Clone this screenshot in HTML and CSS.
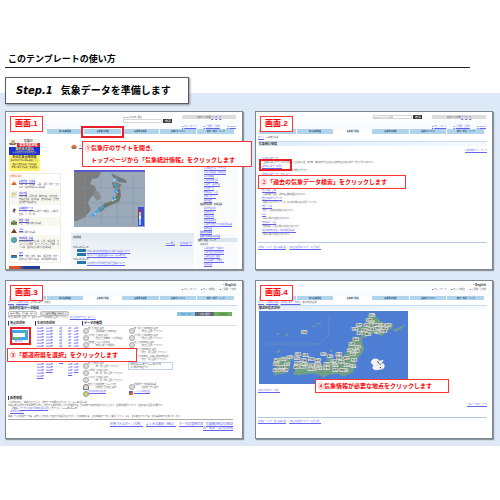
FILE: index.html
```html
<!DOCTYPE html>
<html lang="ja">

<head>
    <meta charset="UTF-8">
    <meta name="viewport" content="width=device-width, initial-scale=1.0">
    <title>このテンプレートの使い方</title>
    <link rel="stylesheet" href="styles.css">
</head>

<body>
    <header class="top">
        <h1>このテンプレートの使い方</h1>
        <h2 class="step"><i>Step.1</i>気象データを準備します</h2>
    </header>

    <main class="board">
        <!-- 画面1 トップページ -->
        <section class="panel">
            <div class="head">
                <form class="search">
                    <label for="q1">Google カスタム検索</label>
                    <div class="line"><input id="q1" type="text"><button type="button">検索</button></div>
                </form>
                <div class="tools">
                    <p class="size">文字サイズ変更 <a href="#">小</a>・<a href="#">中</a>・<a href="#">大</a></p>
                    <p class="quick"><a href="#">サイトマップ</a><a href="#">ご意見・ご感想</a><a href="#">English</a></p>
                </div>
            </div>
            <nav class="tabs">
                <a href="#" class="on">ホーム</a><a href="#">防災気象情報</a><a href="#">気象統計情報</a><a href="#">気象等の知識</a><a href="#">気象庁について</a><a href="#">案内・申請・リンク</a>
            </nav>
            <div class="cols">
                <div class="side">
                    <div class="banner white">
                        <svg viewBox="0 0 8 6"><path d="M0 3h8L6 5H1z" fill="#776f50"/><circle cx="4" cy="2" r="2" fill="#c3b47c"/></svg>
                        <div><b>気象庁</b><b class="red">緊急地震速報</b></div>
                    </div>
                    <div class="banner blue"><b>東日本大震災</b><p>～東北地方太平洋沖地震～</p></div>
                    <div class="banner yellow"><b>防災気象支援情報</b><p>被災地向けの気象情報はこちら</p></div>
                    <div class="banner yellow"><p>被災者支援情報・復旧情報</p><p>節電に関する情報・各種支援</p></div>
                    <div class="menu">
                        <h3>分野別に探す</h3>
                        <div class="item"><svg viewBox="0 0 6 6"><path d="M0 5l3-4 3 4z" fill="#f08a28"/><path d="M1 4h4" stroke="#be4420"/></svg>
                            <div><a href="#">気象警報・注意報</a><p>気象警報・注意報、台風、大雨・洪水・土砂災害・竜巻等の防災気象情報</p></div></div>
                        <div class="item"><svg viewBox="0 0 6 6"><rect width="6" height="6" fill="#cfe5f8"/><circle cx="3" cy="3" r="2" fill="#f6c964"/><path d="M2 4h4" stroke="#fff"/></svg>
                            <div><a href="#">天気予報</a><p>天気予報、週間予報、季節予報、分布予報・時系列予報、黄砂情報、紫外線情報、異常天候早期警戒情報など</p></div></div>
                        <div class="item"><svg viewBox="0 0 6 6"><path d="M1 5l2-4 2 1-1 4z" fill="#999"/><circle cx="3" cy="3" r="1" fill="#444"/></svg>
                            <div><a href="#">気象観測データ</a><p>アメダス・過去の気象データ検索、気象衛星観測、レーダー等</p></div></div>
                        <div class="item"><svg viewBox="0 0 6 6"><path d="M0 3l3-2 3 2v3H0z" fill="#69a56a"/><path d="M0 4l3 1 3-2" stroke="#874d33" fill="none"/></svg>
                            <div><a href="#">地震・津波</a><p>地震、津波に関する情報</p></div></div>
                        <div class="item"><svg viewBox="0 0 6 6"><path d="M0 5l2-3h2l2 3z" fill="#7a4423"/><path d="M2 2l1-2 1 2z" fill="#e25b28"/></svg>
                            <div><a href="#">火山</a><p>火山に関する情報</p></div></div>
                        <div class="item"><svg viewBox="0 0 6 6"><circle cx="3" cy="3" r="3" fill="#4b9cd5"/><path d="M1 2l2-1 1 2-2 2zM4 4l1-1v1z" fill="#76b852"/></svg>
                            <div><a href="#">地球環境・気候</a><p>近年の世界の異常気象、気温、海面水温、エルニーニョ現象、ヒートアイランド現象、オゾン層、黄砂などに関する各種情報</p></div></div>
                        <div class="item"><svg viewBox="0 0 6 6"><path d="M0 3h6v3H0z" fill="#2e87b8"/><path d="M1 3h4L4 4H2z" fill="#833"/></svg>
                            <div><a href="#">海洋</a><p>波浪、潮位、海流、海氷、海面水温、潮汐・高潮などに関する情報、海洋の健康診断表</p></div></div>
                    </div>
                    <div class="strip"></div>
                </div>
                <div class="center">
                    <div class="lead">
                        <svg viewBox="0 0 6 6"><path d="M0 3q3-5 6 0l-1 2H1z" fill="#e57738"/><path d="M1 4h4" stroke="#3e7d9c"/></svg>
                        <a href="#">アメダス</a>
                    </div>
                    <svg class="radar" viewBox="0 0 71 57" role="img" aria-label="アメダス 降水量">
                        <rect width="71" height="57" fill="#9baab8"/>
                        <rect width="71" height="2" fill="#5a5ad0"/>
                        <path d="M0 2h27l-3 6-6 1-2 5 5 2 2 7-6 4-3 6 3 7-6 7-8 4H0z" fill="#7d7d7d"/>
                        <path d="M20 20l5 2 2 6-4 3-3-4z" fill="#8a8a88"/>
                        <path d="M37 3l6 3 9 4 1 3-8-1-6-5z" fill="#777"/>
                        <path d="M24 38l4-2 3-3 7-2 4-5 1-6 3-2 1 8-2 6-8 3-6 3-4 4-2-1z" fill="#6f7569"/>
                        <path d="M38 12l6 1 4 2-4 4-5-1z" fill="#777c72"/>
                        <path d="M41 8l2 3M40 14l3 2M42 18l-1 5M38 27l3 2M22 42l7-5M18 46l4-4M26 38l4-1" stroke="#3da2ee" stroke-width="2"/>
                        <path d="M39 11l3-2M42 21l2 2M20 43l2 1M38 31l4-2" stroke="#b8e4fb"/>
                        <path d="M11 3v54M27 3v54M43 3v54M59 3v54M0 18h71M0 33h71M0 47h71" stroke="#7f90a4" stroke-width=".4"/>
                        <rect x="64" y="37" width="6" height="19" fill="#3a4fe0"/>
                        <path d="M66 39v3" stroke="#d22" stroke-width="2"/><path d="M66 42v4" stroke="#fb4" stroke-width="2"/><path d="M66 46v3" stroke="#ff6" stroke-width="2"/><path d="M66 49v6" stroke="#9cf" stroke-width="2"/>
                    </svg>
                    <div class="news">
                        <h3>新着情報</h3>
                        <p class="more"><a href="#">RSS配信</a><a href="#">新着情報一覧</a></p>
                        <p>平成23年9月30日</p>
                        <ul>
                            <li><a href="#">平成23年8月の地球温暖化に関する情報について</a></li>
                            <li><a href="#">エルニーニョ監視速報No.228（2011年9月）</a></li>
                        </ul>
                        <p>平成23年9月29日</p>
                        <ul>
                            <li><a href="#">東北地方太平洋沖地震の余震活動について</a></li>
                        </ul>
                    </div>
                </div>
                <div class="links">
                    <ul>
                        <li><a href="#">東日本大震災・アクセス</a></li>
                        <li><a href="#">防災気象情報・各種資料</a></li>
                        <li><a href="#">災害の概要</a></li>
                        <li><a href="#">気象観測の記録</a></li>
                        <li><a href="#">気象庁・報道発表</a></li>
                        <li><a href="#">刊行物一覧</a></li>
                        <li><a href="#">地球環境・気候</a></li>
                        <li><a href="#">各種レポート</a></li>
                        <li><a href="#">調査報告</a></li>
                    </ul>
                    <p><b>報道発表資料・各種会議</b></p>
                    <ul>
                        <li><a href="#">報道発表資料</a></li>
                        <li><a href="#">会見の記録</a></li>
                        <li><a href="#">審議会情報</a></li>
                        <li><a href="#">各種会議開催</a></li>
                        <li><a href="#">気象庁が推進する政策評価情報</a></li>
                        <li><a href="#">調達情報</a></li>
                    </ul>
                    <p><a href="#"><b>緊急地震速報</b></a></p>
                    <p><a href="#"><b>気象庁の地震火山月報</b></a></p>
                    <h3>案内・申請・リンク</h3>
                    <p>各種申請</p>
                    <ul>
                        <li><a href="#">気象業務法・予報許可</a></li>
                        <li><a href="#">気象予報士試験の申請</a></li>
                        <li><a href="#">気象の証明・鑑定</a></li>
                        <li><a href="#">法令情報等（手数料）</a></li>
                        <li><a href="#">採用情報</a></li>
                    </ul>
                </div>
            </div>

            <span class="mark mark-tab"></span>
            <b class="tag">画面.1</b>
            <p class="note note1">①気象庁のサイトを開き、<br>　トップページから「気象統計情報」をクリックします</p>
        </section>

        <!-- 画面2 気象統計情報 -->
        <section class="panel">
            <div class="head">
                <form class="search">
                    <div class="line"><input id="q2" type="text" placeholder="Google カスタム検索" aria-label="サイト内検索"><button type="button">検索</button></div>
                </form>
                <div class="tools">
                    <p class="size">文字サイズ変更 <a href="#">小</a>・<a href="#">中</a>・<a href="#">大</a></p>
                    <p class="quick"><a href="#">サイトマップ</a><a href="#">ご意見・ご感想</a><a href="#">English</a></p>
                </div>
            </div>
            <nav class="tabs">
                <a href="#">ホーム</a><a href="#">防災気象情報</a><a href="#" class="on">気象統計情報</a><a href="#">気象等の知識</a><a href="#">気象庁について</a><a href="#">案内・申請・リンク</a>
            </nav>
            <div class="page">
                <p class="crumb"><a href="#">ホーム</a> &gt; 気象統計情報</p>
                <h3 class="bar">気象統計情報</h3>
                <p class="right"><a href="#">気象庁統計サイトマップ</a></p>
                <dl class="stats">
                    <dt><a href="#">最新の気象データ</a></dt>
                    <dd>全国の気象台やアメダスで観測した最新の気温、降水量、風の状況や最大値など各地の最新の気象データがご覧になれます</dd>
                    <dt><a href="#">過去の気象データ検索</a></dt>
                    <dd>過去の気温や降水量などのデータが検索できます</dd>
                    <dt><a href="#">過去の気象データ・ダウンロード</a></dt>
                    <dd>各地の気温や降水量などの観測データを地点ごとにまとめて表示・ダウンロードすることができます</dd>
                    <dt><a href="#">地球環境のデータ</a></dt>
                    <dd>地球温暖化、オゾン層、大気環境、海洋環境など、気象観測所、気象衛星・数値予報、地磁気などの各種資料がございます</dd>
                    <dt><a href="#">天気予報・台風</a></dt>
                    <dd>台風の統計資料、過去の台風経路図があります</dd>
                    <dt><a href="#">数値予報モデルデータ</a></dt>
                    <dd>竜巻およびダウンバーストなどの突風事例を収録しています</dd>
                    <dt><a href="#">地震・津波</a></dt>
                    <dd>地震・津波の各種資料があります</dd>
                    <dt><a href="#">火山</a></dt>
                    <dd>火山に関する資料があります</dd>
                    <dt><a href="#">地球環境・気候</a></dt>
                    <dd>地球環境・気候に関する資料があります</dd>
                    <dt><a href="#">海洋の健康診断表（海洋の総合情報）</a></dt>
                    <dd>海洋に関する資料があります</dd>
                </dl>
                <p class="foot"><a href="#">著作権・リンク・個人情報保護</a> ｜ <a href="#">利用上の注意について（免責事項）</a></p>
            </div>

            <span class="mark mark-link"></span>
            <b class="tag">画面.2</b>
            <p class="note note2">②「過去の気象データ検索」をクリックします</p>
        </section>

        <!-- 画面3 過去の気象データ検索 -->
        <section class="panel">
            <div class="head plain">
                <div class="tools">
                    <p><b>・English</b></p>
                    <p class="quick"><a href="#">サイトマップ</a><a href="#">サイト内検索</a><a href="#">ご意見・ご感想</a></p>
                </div>
            </div>
            <nav class="tabs">
                <a href="#">ホーム</a><a href="#">防災気象情報</a><a href="#" class="on">気象統計情報</a><a href="#">気象等の知識</a><a href="#">気象庁について</a><a href="#">案内・申請・リンク</a>
            </nav>
            <div class="page past">
                <p class="crumb"><a href="#">ホーム</a> &gt; <a href="#">気象統計情報</a> &gt; 過去の気象データ検索</p>
                <h3 class="bar">過去の気象データ検索</h3>
                <div class="modes">
                    <button type="button">地域の気温、降水量、風など</button>
                    <button type="button" class="off">全国の気温、風など</button>
                    <div class="ads"><span>防災くらぶ</span><span class="dark">お天気相談</span><span class="green">気象情報</span></div>
                </div>
                <p>地点と年月日を選択して、表示するデータの種類を選択して下さい。<a href="#">地点選択のやり直しはこちら</a></p>
                <div class="picker">
                    <div>
                        <h4>地点の選択</h4>
                        <a class="area" href="#">
                            <svg viewBox="0 0 18 10"><rect width="18" height="10" fill="#42a7ea"/><path d="M1 9l5-3 4-1 3-4 3 1-3 4-5 3z" fill="#63ba63"/><rect x="3" y="3" width="12" height="4" fill="#fff"/></svg>
                            <span>都道府県</span>
                        </a>
                    </div>
                    <div>
                        <h4>年月日の選択</h4>
                        <div class="years" id="years"></div>
                    </div>
                    <div>
                        <h4>データの種類</h4>
                        <div class="kinds">
                            <ul>
                                <li>年ごとの値を表示<small>（観測開始からの年の値）</small></li>
                                <li>３か月ごとの値を表示<small>（地点ごとの季節・３か月の値）</small></li>
                                <li>観測史上１～１０位の値<small>（年間を通じての順位）</small></li>
                                <li>月ごとの値を表示<small>（年を選択してください）</small></li>
                                <li>旬ごとの値を表示<small>（年を選択してください）</small></li>
                                <li>日ごとの値を表示<small>（年・月を選択して下さい）</small></li>
                                <li>１時間ごとの値を表示<small>（年・月・日を選択して下さい）</small></li>
                                <li>１０分ごとの値を表示<small>（年・月・日を選択して下さい）</small></li>
                                <li class="hill">地点ごとの観測史上１～１０位<small>（観測所ごとの値を表示）</small></li>
                                <li class="leaf"><a href="#">新旧の平年値の比較</a></li>
                            </ul>
                            <ul>
                                <li>年・月ごとの平年値を表示<small>（地点を選択して下さい）</small></li>
                                <li>３か月ごとの平年値を表示<small>（地点を選択して下さい）</small></li>
                                <li>旬ごとの平年値を表示<small>（地点を選択して下さい）</small></li>
                                <li>半旬ごとの平年値を表示<small>（地点、月を選択して下さい）</small></li>
                                <li>日ごとの平年値（最高気温の平年値等）<small>（地点、月を選択して下さい）</small></li>
                                <li class="tip"><span>平年値は1981年から2010年までの<br>３０年平均の値です</span></li>
                                <li class="none"></li>
                                <li class="none"></li>
                                <li>観測所データの品質情報<small>（観測所一覧を表示）</small></li>
                                <li class="mesh"><a href="#">メッシュ平年値図</a></li>
                            </ul>
                        </div>
                    </div>
                </div>
                <h4 class="short">新着情報</h4>
                <p>１０月の新着を、掲載するとともに、過去データの更新を行いました。（2011年9月30日）</p>
                <p>平成23年東北地方太平洋沖地震に伴い、地震や津波の影響を受けた観測所では、震災前後で値の均質性がないことから、観測所の統計について、値の利用に注意が必要です。</p>
                <p>　　詳細は、<a href="#">データを利用する際の注意事項</a>をご覧下さい。（2011年6月29日）</p>
                <p>・<a href="#">過去のお知らせ</a></p>
                <p class="last">掲載している観測データは、過去にさかのぼって修正する場合があります。ご利用の際には、最新の掲載データをご確認ください。なお、主な修正については、新着情報の中でお知らせします。</p>
                <div class="more2">
                    <p><a href="#">利用される方へ（凡例）</a><a href="#">よくある質問（FAQ）</a><a href="#">データの更新状況</a><a href="#">気象観測統計の解説</a></p>
                    <p><a href="#">年・季節・各月の天候</a></p>
                </div>
            </div>

            <span class="mark mark-area"></span>
            <b class="tag">画面.3</b>
            <p class="note note3">③「都道府県を選択」をクリックします</p>
        </section>

        <!-- 画面4 都道府県の選択 -->
        <section class="panel">
            <div class="head plain">
                <div class="tools">
                    <p><b>・English</b></p>
                    <p class="quick"><a href="#">サイトマップ</a><a href="#">サイト内検索</a><a href="#">ご意見・ご感想</a></p>
                </div>
            </div>
            <nav class="tabs">
                <a href="#">ホーム</a><a href="#">防災気象情報</a><a href="#" class="on">気象統計情報</a><a href="#">気象等の知識</a><a href="#">気象庁について</a><a href="#">案内・申請・リンク</a>
            </nav>
            <div class="page past">
                <p class="crumb"><a href="#">ホーム</a> &gt; <a href="#">気象統計情報</a> &gt; <a href="#">過去の気象データ検索</a> &gt; 都道府県の選択</p>
                <h3 class="bar">都道府県の選択</h3>
                <svg class="japan" viewBox="0 0 447 219" role="img" aria-label="日本地図">
                    <rect width="447" height="219" fill="#4d7ed3"/>
                    <path d="M15 99h165l30-27V10" fill="none" stroke="#7893c4" stroke-width="2"/>
                    <g fill="#6ea182" stroke="#8ea9a5" stroke-width="1">
                        <path d="M337 5l14 12 16 16 20 9 14-4-4 14-15 8-13 14-21-8-22 5-6 8-13-2 4-12-14-10 3-9 18 2 7-12 2-18z"/>
                        <path d="M287 76l11 5 11-3-1 13 6 22-7 17-16 15-5 21-5 19-17 5-13 6-11-9-20 3-15 1-12 9-10-9-19-5-23 3-22 3-17-3 9-12 27-11 25-2 12-5 19 3 10-10 3-16 9 1-3 11 18-3 21-8 13-17 5-18z"/>
                        <path d="M104 162l17-8 25-2 9 8-8 9-17 0-8 13-13-4z"/>
                        <path d="M47 145l19-7 22-2 11 10-9 13 3 12-13 15-16 2-17 4-4-10 10-11-11-13z"/>
                        <path d="M402 57l20-8 17-6-14 10-17 9zM390 48l15-7-7 8zM53 123l12-8-7 11z"/>
                        <path d="M51 69l8-2 1 5zM78 72l8-3-3 6zM126 61l15-4 3 8-11 4zM160 47l7-4 2 3zM172 39l15-5-8 6zM213 121l7-6-2 8z"/>
                    </g>
                    <path d="M335 155c3-14 20-16 26-6l14-3-8 11c12-3 13 12 4 18l-19 3c-12-1-14-9-9-15z" fill="#f2f2f2"/>
                    <path d="M356 151l4 6M365 158l-3 4M363 168l3 4" stroke="#333" stroke-width="3"/>
                    <g class="pref">
                        <text x="331" y="14">宗谷</text><text x="321" y="29">留萌</text><text x="292" y="44">石狩</text><text x="315" y="44">空知</text><text x="330" y="36">上川</text><text x="343" y="44">網走</text><text x="361" y="44">北見</text><text x="380" y="44">紋別</text>
                        <text x="280" y="58">後志</text><text x="308" y="60">胆振</text><text x="327" y="57">日高</text><text x="346" y="65">十勝</text><text x="366" y="63">釧路</text><text x="350" y="55">帯広</text><text x="294" y="68">渡島</text><text x="319" y="71">檜山</text><text x="370" y="53">根室</text>
                        <text x="282" y="87">青森</text><text x="270" y="102">秋田</text><text x="288" y="112">岩手</text><text x="265" y="121">山形</text><text x="284" y="123">宮城</text><text x="231" y="132">新潟</text><text x="274" y="132">福島</text><text x="254" y="144">栃木</text><text x="277" y="151">茨城</text><text x="233" y="145">群馬</text>
                        <text x="205" y="139">富山</text><text x="185" y="132">石川</text><text x="215" y="153">長野</text><text x="239" y="156">埼玉</text><text x="256" y="164">東京</text><text x="273" y="168">千葉</text><text x="195" y="162">岐阜</text><text x="219" y="166">山梨</text><text x="242" y="179">神奈川</text><text x="221" y="179">静岡</text><text x="195" y="173">愛知</text>
                        <text x="168" y="149">福井</text><text x="168" y="162">滋賀</text><text x="148" y="148">京都</text><text x="150" y="164">大阪</text><text x="172" y="175">三重</text><text x="146" y="177">和歌山</text><text x="125" y="149">兵庫</text><text x="131" y="134">鳥取</text><text x="108" y="132">島根</text><text x="106" y="145">岡山</text><text x="85" y="142">広島</text><text x="66" y="147">山口</text>
                        <text x="129" y="162">香川</text><text x="107" y="159">愛媛</text><text x="124" y="172">徳島</text><text x="104" y="170">高知</text><text x="46" y="150">福岡</text><text x="76" y="161">大分</text><text x="43" y="161">佐賀</text><text x="62" y="170">熊本</text><text x="70" y="181">宮崎</text><text x="42" y="181">鹿児島</text><text x="127" y="67">沖縄</text>
                    </g>
                </svg>
                <p class="guide"><a href="#">利用される方へ（凡例）</a></p>
                <p class="right totop"><a href="#">このページのトップへ</a></p>
                <p class="foot"><a href="#">著作権・リンク・個人情報保護</a> ｜ <a href="#">利用上の注意について（免責事項）</a></p>
            </div>

            <b class="tag">画面.4</b>
            <p class="note note4">④気象情報が必要な地点をクリックします</p>
        </section>
    </main>

    <script>
        // 年・月・日の一覧
        var years = document.querySelector("#years");
        var cols = [
            { n: 17, text: function (i) { return 2011 - i + "年"; } },
            { n: 15, text: function (i) { return 1994 - i + "年"; } },
            { n: 12, text: function (i) { return i + 1 + "月"; } },
            { n: 16, text: function (i) { return i + 1 + "日"; } },
            { n: 15, text: function (i) { return i + 17 + "日"; } }
        ];
        for (var c = 0; c < cols.length; c++) {
            var ul = document.createElement("ul");
            for (var i = 0; i < cols[c].n; i++) {
                var li = document.createElement("li");
                li.innerHTML = '<a href="#">' + cols[c].text(i) + "</a>";
                ul.appendChild(li);
            }
            years.appendChild(ul);
        }
    </script>
</body>

</html>
```
FILE: styles.css
```css
* {
    box-sizing: border-box;
    margin: 0;
    padding: 0;
}

body {
    background: #fff;
    color: #000;
    font-family: "Liberation Sans", "Noto Sans CJK JP", sans-serif;
}

ul {
    list-style: none;
}

a {
    color: #6464ee;
}

svg {
    display: block;
}

.top {
    padding: 52px 0 0 5px;
}

.top h1 {
    margin-right: 30px;
    padding-left: 3px;
    border-bottom: 1px solid #222;
    font-size: 9px;
    line-height: 15px;
}

.step {
    position: relative;
    z-index: 1;
    width: max-content;
    margin: 9px 0 -11px;
    padding: 0 17px 0 10px;
    border: 1px solid #5c5c5c;
    background: #fff;
    box-shadow: 1px 1px 2px #8a929c;
    font-size: 10px;
    line-height: 25px;
}

.step i {
    margin-right: 8px;
    font-family: "DejaVu Sans", sans-serif;
}

.board {
    display: grid;
    grid-template-columns: 1fr 1fr;
    gap: 10px 12px;
    padding: 18px 7px 7px 5px;
    background: #dde9f6;
}

.panel {
    position: relative;
    display: flex;
    flex-direction: column;
    min-width: 0;
    min-height: 159px;
    border: 1px solid #7f8790;
    background: #fff;
    box-shadow: 1px 1px 1px #8c949c;
    font-size: 2px;
    line-height: 4px;
    color: #555;
}

/* ヘッダー */
.head {
    display: flex;
    justify-content: flex-end;
    gap: 10px;
    height: 17px;
    padding: 3px 6px 0 0;
    background: linear-gradient(#fff, #f8fafc);
}

.head.plain {
    height: 15px;
    padding-top: 2px;
}

.head.plain .tools {
    gap: 0;
}

.search {
    width: 49px;
}

.search .line {
    display: flex;
    gap: 1px;
}

.search input {
    flex: 1;
    min-width: 0;
    height: 4px;
    border: 1px solid #d5d5d5;
    font-size: 2px;
}

.search button {
    width: 9px;
    height: 4px;
    border: 0;
    background: #333;
    color: #fff;
    font-size: 3px;
    line-height: 4px;
}

.tools {
    display: flex;
    flex-direction: column;
    gap: 5px;
    width: 54px;
    text-align: right;
}

.size {
    background: #ddd;
    text-align: center;
}

.plain .tools {
    width: 54px;
    font-size: 3px;
    color: #333;
}

.quick {
    display: flex;
    justify-content: space-between;
    font-size: 2px;
}

.quick a::before {
    content: "■";
    margin-right: 1px;
    color: #4575c4;
}

.plain .quick a {
    color: #555;
    text-decoration: none;
}

.plain .quick a::before {
    color: #223a94;
}

/* タブ */
.tabs {
    display: grid;
    grid-template-columns: repeat(6, 1fr);
    gap: 1px;
    margin: 0 8px 0 3px;
    line-height: 5px;
}

.plain + .tabs {
    line-height: 4px;
}

.tabs a {
    background: #b0d4ec;
    color: #2d5573;
    font-weight: bold;
    text-align: center;
    text-decoration: none;
}

.tabs .on {
    background: #fff;
}

/* トップページ */
.cols {
    display: grid;
    grid-template-columns: 52px 1fr 42px;
    gap: 8px;
    flex: 1;
    padding: 5px 4px 0 3px;
}

.side {
    display: flex;
    flex-direction: column;
}

.banner {
    width: 31px;
    height: 8px;
    text-align: center;
    line-height: 3px;
    overflow: hidden;
}

.banner b {
    display: block;
    font-size: 3px;
    line-height: 4px;
}

.white {
    display: flex;
    background: #f4f3ec;
}

.white svg {
    width: 8px;
}

.white div {
    flex: 1;
}

.red {
    background: #d8262c;
    color: #fff;
}

.blue {
    background: #1f2fd8;
    color: #ffef46;
}

.yellow {
    background: #fff36a;
    color: #333;
}

.menu {
    margin-top: 2px;
    border: 1px solid #f2ede2;
}

.menu h3 {
    color: #ea7d3c;
    font-size: 2px;
    line-height: 4px;
}

.item {
    display: flex;
    gap: 2px;
    padding: 1px;
    line-height: 3px;
}

.item svg {
    flex: none;
    width: 6px;
    height: 6px;
    margin-top: 1px;
}

.item a {
    font-weight: bold;
    line-height: 4px;
}

.item:nth-child(odd) {
    background: #f8f7f0;
}

.strip {
    flex: 1;
    width: 31px;
    min-height: 2px;
    max-height: 3px;
    margin-top: auto;
    background: linear-gradient(90deg, #e0502a 30%, #223d9b 50%);
}

.center {
    display: flex;
    flex-direction: column;
    margin: 0 -6px 0 2px;
}

.lead {
    display: flex;
    gap: 2px;
    height: 31px;
    padding-top: 5px;
}

.lead svg {
    width: 6px;
    height: 6px;
}

.radar {
    width: 71px;
    height: 57px;
    margin-left: 3px;
}

.news {
    flex: 1;
    margin-top: 6px;
    padding: 2px;
    background: linear-gradient(#e3ebf1, #fafcfd);
    line-height: 4px;
}

.news h3 {
    font-size: 2px;
    line-height: 4px;
}

.more {
    display: flex;
    justify-content: flex-end;
    gap: 5px;
    margin-top: 2px;
}

.more a:first-child::before {
    content: "■";
    color: #f08030;
}

.news li {
    display: flex;
    gap: 1px;
    padding-left: 4px;
}

.news li::before {
    content: "";
    width: 9px;
    height: 3px;
    background: #2774a8;
}

.links {
    padding: 27px 1px 0 2px;
    background: #fafbfd;
}

.links li {
    padding-left: 4px;
}

.links li::before {
    content: "・";
}

.links p {
    padding-left: 2px;
}

.links h3 {
    background: #dbe5ec;
    font-size: 2px;
    line-height: 4px;
}

/* 下層ページ */
.page {
    display: flex;
    flex: 1;
    flex-direction: column;
    padding: 1px 5px 0 2px;
}

.crumb {
    line-height: 4px;
}

.bar {
    margin: 2px 0;
    padding-left: 1px;
    background: linear-gradient(90deg, #dfedf9, #f6faff);
    border-top: 1px solid #c6dcf2;
    font-size: 3px;
    line-height: 4px;
    color: #333;
}

.right {
    text-align: right;
}

.stats {
    margin-top: 4px;
}

.stats dt::before {
    content: "・";
}

.stats dt {
    padding-left: 2px;
}

.stats dd {
    padding-left: 5px;
}

.foot {
    margin-top: 6px;
    padding-top: 2px;
    border-top: 1px solid #b5c8dc;
}

/* 過去の気象データ検索 */
.past {
    padding-top: 0;
    line-height: 3px;
}

.past .bar {
    margin: 1px 0;
}

.modes {
    display: flex;
    align-items: center;
    gap: 3px;
}

.modes button {
    width: 29px;
    height: 5px;
    border: 1px solid #bbb;
    border-radius: 2px;
    background: #fff;
    font-size: 2px;
    line-height: 3px;
}

.modes .off {
    background: #ddd;
}

.ads {
    display: grid;
    grid-template-columns: repeat(3, 1fr);
    width: 55px;
    height: 4px;
    margin: 0 5px 0 auto;
    line-height: 4px;
    text-align: center;
}

.ads span {
    background: #8ac4e8;
}

.ads .dark {
    background: #60687a;
    color: #fff;
}

.ads .green {
    background: #6caf5c;
}

.picker {
    display: grid;
    grid-template-columns: 23px 43px 1fr;
    gap: 4px;
    margin-top: 2px;
}

.past h4 {
    padding-left: 1px;
    border-left: 1px solid #1f3f82;
    border-bottom: 1px solid #dde;
    font-size: 3px;
    line-height: 4px;
    color: #222;
}

.past .short {
    width: 23px;
    margin-bottom: 1px;
    border-bottom: 0;
}

.area {
    display: block;
    width: 18px;
    margin: 4px 0 0 2px;
    text-align: center;
}

.years {
    display: grid;
    grid-template-columns: 8px 12px 8px 5px 5px;
    gap: 1px;
    margin: 1px 0 0 2px;
}

.years a {
    background: #dcdcfa;
}

.kinds {
    display: grid;
    grid-template-columns: 43px 1fr;
    gap: 3px;
}

.kinds li {
    position: relative;
    height: 7px;
    padding: 1px 0 0 6px;
    white-space: nowrap;
}

.kinds li::before {
    content: "";
    position: absolute;
    top: 2px;
    left: 1px;
    width: 4px;
    height: 4px;
    border: 1px solid #aaa;
    border-radius: 50%;
    background: #ddd;
}

.kinds small {
    display: block;
    padding-left: 6px;
    font-size: 2px;
}

.kinds .hill::before {
    border-color: #777;
    border-radius: 3px 3px 0 0;
}

.kinds .leaf::before {
    border-color: #7a9;
    background: #e9c46a;
}

.kinds .mesh::before {
    border: 0;
    border-radius: 0;
    background: linear-gradient(135deg, #2b6bd0 50%, #e0672c 50%);
}

.kinds .none::before,
.kinds .tip::before {
    display: none;
}

.kinds .tip {
    padding-left: 0;
}

.tip span {
    display: block;
    width: 45px;
    padding: 0 1px;
    border: 1px solid #c5cfec;
}

.last {
    margin-top: 2px;
}

.more2 {
    margin: 1px 4px 0 0;
    padding-top: 2px;
    border-top: 1px solid #aaa;
    line-height: 4px;
    text-align: right;
    font-size: 3px;
}

.more2 a {
    margin-left: 3px;
}

/* 都道府県の選択 */
.japan {
    width: 149px;
    margin-left: 1px;
}

.pref {
    fill: #333;
    stroke: #e4e8e0;
    stroke-width: 3px;
    paint-order: stroke;
    font-size: 8px;
}

.guide {
    margin-top: 5px;
}

.totop {
    margin: 11px 0 5px;
}

/* 赤い案内 */
.tag,
.note {
    position: absolute;
    border: 1px solid #f33;
    background: #fff;
    color: #f00;
    font-weight: bold;
    white-space: nowrap;
}

.tag {
    top: 4px;
    left: 4px;
    padding: 0 4px;
    font-size: 8px;
    line-height: 14px;
}

.note {
    padding: 0 2px;
    font-size: 6px;
    line-height: 12px;
}

.note1 {
    top: 29px;
    left: 76px;
    width: 170px;
}

.note2 {
    top: 63px;
    left: 2px;
    width: 148px;
}

.note3 {
    top: 67px;
    left: 1px;
    width: 130px;
}

.note4 {
    top: 98px;
    left: 59px;
    width: 134px;
}

.mark {
    position: absolute;
    border: 2px solid #e8202a;
}

.mark-tab {
    top: 14px;
    left: 75px;
    width: 43px;
    height: 12px;
}

.mark-link {
    top: 47px;
    left: 3px;
    width: 33px;
    height: 12px;
}

.mark-area {
    top: 46px;
    left: 4px;
    width: 21px;
    height: 18px;
}
```
